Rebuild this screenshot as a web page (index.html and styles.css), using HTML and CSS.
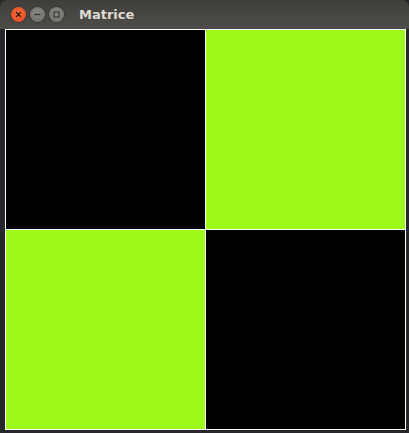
FILE: index.html
```html
<!DOCTYPE html>
<html>
<head>
<meta charset="utf-8">
<link rel="stylesheet" href="styles.css">
</head>
<body>
<div class="window">
  <div class="titlebar">
    <div class="buttons">
      <span class="btn close"><svg width="15" height="15" viewBox="0 0 15 15"><path d="M5.5 5.5 L9.5 9.5 M9.5 5.5 L5.5 9.5" stroke="#3a1a10" stroke-width="1.4" stroke-linecap="round"/></svg></span>
      <span class="btn min"><svg width="15" height="15" viewBox="0 0 15 15"><path d="M4.5 7.5 H10.5" stroke="#3a3935" stroke-width="1.4"/></svg></span>
      <span class="btn max"><svg width="15" height="15" viewBox="0 0 15 15"><rect x="5" y="5" width="5" height="5" fill="none" stroke="#3a3935" stroke-width="1.2"/></svg></span>
    </div>
    <span class="title">Matrice</span>
  </div>
  <div class="body">
    <div class="grid">
      <div class="cell black"></div>
      <div class="cell green"></div>
      <div class="cell green"></div>
      <div class="cell black"></div>
    </div>
  </div>
</div>
</body>
</html>
```
FILE: styles.css
```css
html, body {
  margin: 0;
  padding: 0;
  background: #1d1f22;
}
.window {
  width: 409px;
  height: 433px;
  display: flex;
  flex-direction: column;
  background: #25272a;
}
.titlebar {
  height: 29px;
  flex: none;
  display: flex;
  align-items: center;
  background: linear-gradient(#3f3e3a, #4a4844 60%, #4d4b46);
  border-radius: 7px 7px 0 0;
  box-sizing: border-box;
  padding-left: 11px;
}
.buttons {
  display: flex;
  gap: 4px;
  margin-top: -1px;
}
.btn {
  width: 15px;
  height: 15px;
  border-radius: 50%;
  display: block;
}
.btn svg { display: block; }
.close {
  background: radial-gradient(circle at 50% 40%, #f36b3e, #e2471d);
  box-shadow: 0 0 0 1px #3b3a36;
}
.min, .max {
  background: radial-gradient(circle at 50% 40%, #8a8883, #6d6b66);
  box-shadow: 0 0 0 1px #3b3a36;
}
.title {
  margin-left: 15px;
  font-family: "DejaVu Sans", sans-serif;
  font-weight: bold;
  font-size: 13px;
  color: #dfdbd2;
  margin-top: -1px;
}
.body {
  flex: 1;
  padding: 0 3px 3px 5px;
}
.grid {
  width: 401px;
  height: 401px;
  box-sizing: border-box;
  background: #ffffff;
  padding: 1px;
  display: grid;
  grid-template-columns: 199px 199px;
  grid-template-rows: 199px 199px;
  gap: 1px;
}
.black { background: #000000; }
.green { background: #9ef81a; }
```
